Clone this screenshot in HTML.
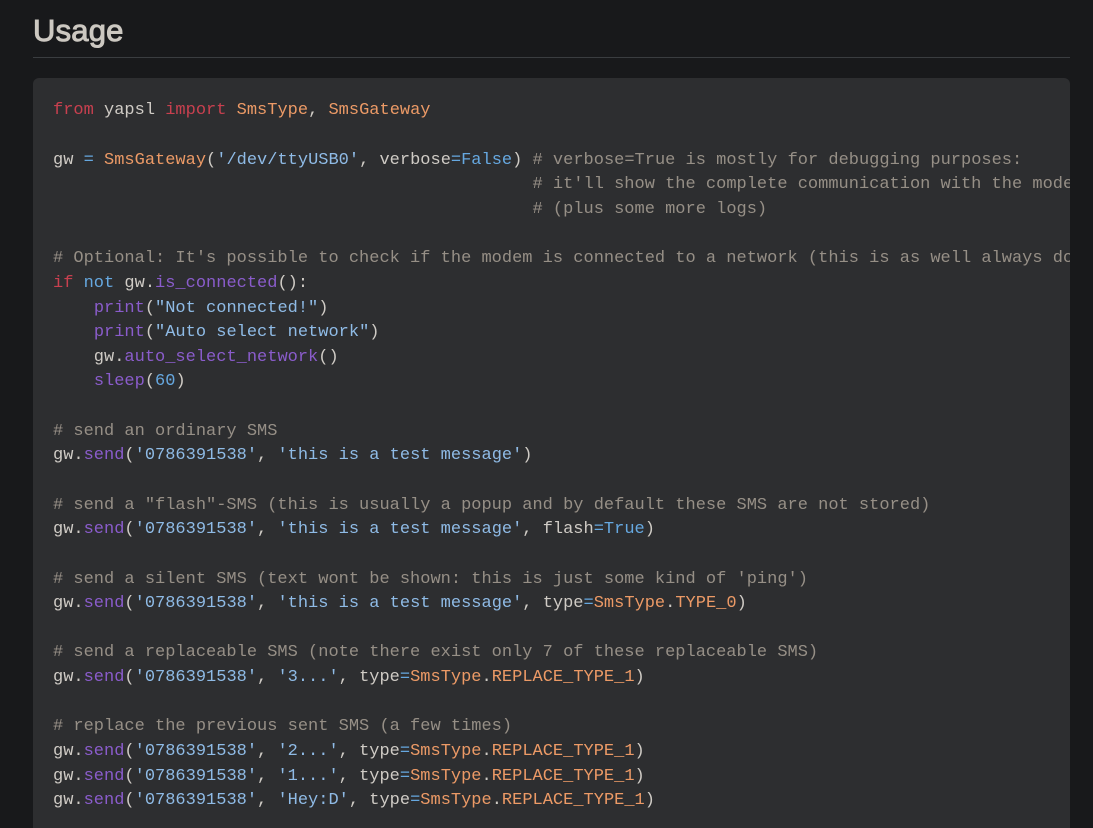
<!DOCTYPE html>
<html><head><meta charset="utf-8"><style>
html,body{margin:0;padding:0;width:1093px;height:828px;overflow:hidden;background:#18191b}
h2{position:absolute;left:33px;top:8px;margin:0;font:400 31px/46px "Liberation Sans",sans-serif;color:#ccc8c1;-webkit-text-stroke:1px #ccc8c1;letter-spacing:.2px}
#r{position:absolute;left:33px;top:57px;width:1037px;height:1px;background:#3a3d40}
#b{position:absolute;left:33px;top:78px;width:1037px;height:750px;background:#2d2e30;border-radius:6px 6px 0 0;overflow:hidden;font:17px/25px "Liberation Mono",monospace;color:#cfcbc5}
#b div{position:absolute;left:20px;margin-top:-1px;white-space:pre}
.k{color:#c8404f}.t{color:#ec9a66}.o{color:#66a8e0}.s{color:#8fbbe6}.c{color:#968f86}.f{color:#8a5ccb}
</style></head><body>
<h2>Usage</h2><div id="r"></div>
<div id="b">
<div style="top:21px"><span class="k">from</span> yapsl <span class="k">import</span> <span class="t">SmsType</span>, <span class="t">SmsGateway</span></div>
<div style="top:71px">gw <span class="o">=</span> <span class="t">SmsGateway</span>(<span class="s">'/dev/ttyUSB0'</span>, verbose<span class="o">=False</span>) <span class="c"># verbose=True is mostly for debugging purposes:</span></div>
<div style="top:95px">                                               <span class="c"># it'll show the complete communication with the modem</span></div>
<div style="top:120px">                                               <span class="c"># (plus some more logs)</span></div>
<div style="top:169px"><span class="c"># Optional: It's possible to check if the modem is connected to a network (this is as well always done)</span></div>
<div style="top:194px"><span class="k">if</span> <span class="o">not</span> gw.<span class="f">is_connected</span>():</div>
<div style="top:219px">    <span class="f">print</span>(<span class="s">"Not connected!"</span>)</div>
<div style="top:243px">    <span class="f">print</span>(<span class="s">"Auto select network"</span>)</div>
<div style="top:268px">    gw.<span class="f">auto_select_network</span>()</div>
<div style="top:292px">    <span class="f">sleep</span>(<span class="o">60</span>)</div>
<div style="top:342px"><span class="c"># send an ordinary SMS</span></div>
<div style="top:366px">gw.<span class="f">send</span>(<span class="s">'0786391538'</span>, <span class="s">'this is a test message'</span>)</div>
<div style="top:416px"><span class="c"># send a "flash"-SMS (this is usually a popup and by default these SMS are not stored)</span></div>
<div style="top:440px">gw.<span class="f">send</span>(<span class="s">'0786391538'</span>, <span class="s">'this is a test message'</span>, flash<span class="o">=True</span>)</div>
<div style="top:490px"><span class="c"># send a silent SMS (text wont be shown: this is just some kind of 'ping')</span></div>
<div style="top:514px">gw.<span class="f">send</span>(<span class="s">'0786391538'</span>, <span class="s">'this is a test message'</span>, type<span class="o">=</span><span class="t">SmsType</span>.<span class="t">TYPE_0</span>)</div>
<div style="top:563px"><span class="c"># send a replaceable SMS (note there exist only 7 of these replaceable SMS)</span></div>
<div style="top:588px">gw.<span class="f">send</span>(<span class="s">'0786391538'</span>, <span class="s">'3...'</span>, type<span class="o">=</span><span class="t">SmsType</span>.<span class="t">REPLACE_TYPE_1</span>)</div>
<div style="top:637px"><span class="c"># replace the previous sent SMS (a few times)</span></div>
<div style="top:662px">gw.<span class="f">send</span>(<span class="s">'0786391538'</span>, <span class="s">'2...'</span>, type<span class="o">=</span><span class="t">SmsType</span>.<span class="t">REPLACE_TYPE_1</span>)</div>
<div style="top:687px">gw.<span class="f">send</span>(<span class="s">'0786391538'</span>, <span class="s">'1...'</span>, type<span class="o">=</span><span class="t">SmsType</span>.<span class="t">REPLACE_TYPE_1</span>)</div>
<div style="top:711px">gw.<span class="f">send</span>(<span class="s">'0786391538'</span>, <span class="s">'Hey:D'</span>, type<span class="o">=</span><span class="t">SmsType</span>.<span class="t">REPLACE_TYPE_1</span>)</div>
</div>
</body></html>
